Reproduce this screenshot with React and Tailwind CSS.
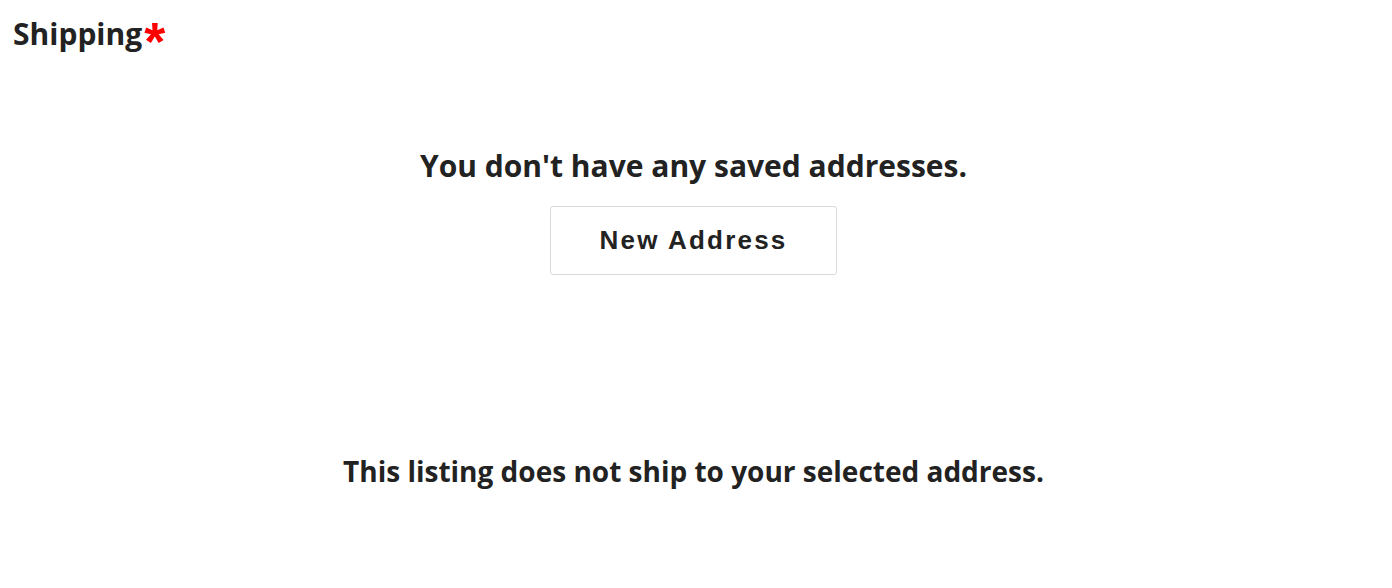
export default function App() {
  return (
    <div className="w-[1387px] h-[588px] bg-white text-[#222] font-['Open_Sans',sans-serif]">
      <div className="px-[13px] pt-[14px]">
        <h2 className="h-[40px] text-[30px] font-bold leading-[40px] flex items-center">
          Shipping
          <span className="ml-[2px] text-[#ff0000] text-[54px] leading-none translate-y-[7px] font-['Liberation_Sans',sans-serif]">*</span>
        </h2>
      </div>
      <div className="flex flex-col items-center pt-[92px]">
        <p className="text-[30px] font-bold leading-[40px]">You don't have any saved addresses.</p>
        <button className="mt-[20px] w-[287px] h-[69px] border border-[#d9d9d9] rounded-[3px] text-[26px] font-bold tracking-[2.2px] font-['Liberation_Sans',sans-serif]">
          New Address
        </button>
        <p className="mt-[177px] text-[28px] font-bold leading-[38px]">This listing does not ship to your selected address.</p>
      </div>
    </div>
  );
}
